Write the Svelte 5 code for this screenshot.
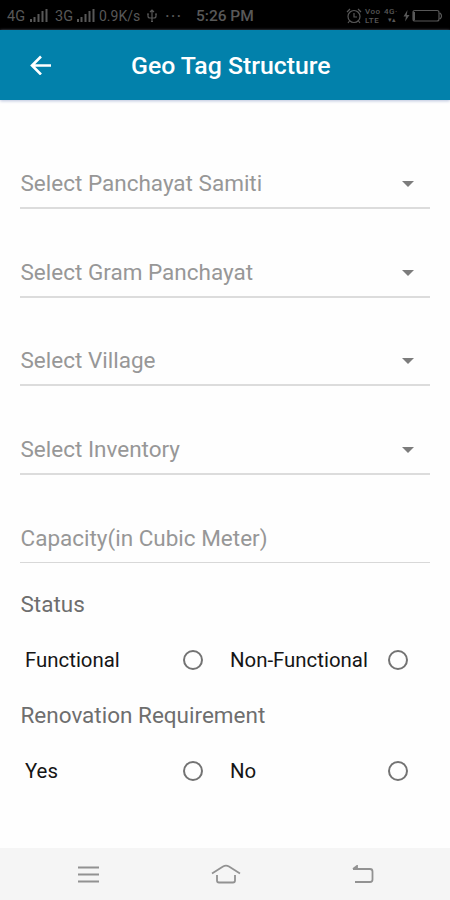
<script lang="ts">
  const selects = [
    "Select Panchayat Samiti",
    "Select Gram Panchayat",
    "Select Village",
    "Select Inventory",
  ];
  const groups = [
    { name: "status", title: "Status", options: ["Functional", "Non-Functional"] },
    { name: "renovation", title: "Renovation Requirement", options: ["Yes", "No"] },
  ];

  let picked: Record<string, string> = $state({});
</script>

{#snippet signal()}
  <svg class="signal" width="18" height="14" viewBox="0 0 18 14">
    <path d="M1 13V10M4.5 13V8M8.5 13V5M12.5 13V2M16.5 13V0" />
  </svg>
{/snippet}

<div class="screen">
  <div class="statusbar">
    <span class="net">4G</span>
    {@render signal()}
    <span class="net second">3G</span>
    {@render signal()}
    <span class="speed">0.9K/s</span>
    <svg class="usb" width="12" height="14" viewBox="0 0 12 14">
      <path d="M6 1V13M4 3L6 1L8 3M2 5V7Q2 9 4 9H8Q10 9 10 7V5M1 5H3M9 5H11M5 12.5H7" />
    </svg>
    <span class="dots">···</span>
    <span class="clock">5:26 PM</span>
    <svg class="alarm" width="16" height="16" viewBox="0 0 16 16">
      <circle cx="8" cy="8.5" r="6" />
      <path d="M8 5V9H11M1 4L4 1M12 1L15 4M3.5 13L2 15M12.5 13L14 15" />
    </svg>
    <span class="stack volte"><b>Voo</b><b>LTE</b></span>
    <span class="stack data"><b>4G·</b><i>▾▴</i></span>
    <svg class="battery" width="40" height="14" viewBox="0 0 40 14">
      <path class="bolt" d="M4.5 1L0.5 7.5H3L2 12.5L6.5 6H3.8Z" />
      <path d="M12 1.5H34Q36 1.5 36 3.5V10Q36 12 34 12H12Q10 12 10 10V3.5Q10 1.5 12 1.5ZM37 4Q40 7 37 10" />
      <path class="bolt" d="M10 3H12V11H10Z" />
    </svg>
  </div>

  <header>
    <button class="back" aria-label="Back">
      <svg width="22" height="20" viewBox="0 0 22 20">
        <path d="M21 10.5H2.5M11 1.5L2 10.5L11 19.5" />
      </svg>
    </button>
    <h1>Geo Tag Structure</h1>
  </header>

  <main>
    {#each selects as label}
      <div class="field">
        <span class="placeholder">{label}</span>
        <svg class="caret" width="12" height="6" viewBox="0 0 12 6"><path d="M0 0H12L6 6Z" /></svg>
      </div>
    {/each}
    <div class="field input">
      <span class="placeholder">Capacity(in Cubic Meter)</span>
    </div>

    {#each groups as group}
      <h2>{group.title}</h2>
      <div class="options">
        {#each group.options as option}
          <label>
            <span>{option}</span>
            <input type="radio" name={group.name} value={option} bind:group={picked[group.name]} />
          </label>
        {/each}
      </div>
    {/each}
  </main>

  <nav>
    <svg width="22" height="18" viewBox="0 0 22 18">
      <path d="M0 2.5H21M0 9.5H21M0 16.5H21" />
    </svg>
    <svg class="home" width="30" height="20" viewBox="0 0 30 20">
      <path d="M1 9.5L12 2.5Q15 0.9 18 2.5L29 9.5M6 11V16.5Q6 18.5 8 18.5H22Q24 18.5 24 16.5V11" />
    </svg>
    <svg width="22" height="19" viewBox="0 0 22 19">
      <path d="M1 4H18Q20.5 4 20.5 6.5V14.5Q20.5 17 18 17H3M1 4L5 1V4" />
    </svg>
  </nav>
</div>

<style>
  :global(body) {
    margin: 0;
  }

  .screen {
    display: flex;
    flex-direction: column;
    width: 450px;
    height: 900px;
    overflow: hidden;
    background: #fefefe;
    font-family: Roboto, "Liberation Sans", sans-serif;
  }

  svg {
    display: block;
    flex: none;
    fill: none;
  }

  .statusbar {
    display: flex;
    align-items: center;
    box-sizing: border-box;
    flex: none;
    height: 30px;
    padding: 2px 7px 0 7px;
    background: #000;
    color: #585858;
    font-size: 14px;
    white-space: nowrap;
  }
  .statusbar svg {
    stroke: #585858;
    stroke-width: 1.2;
  }
  .net {
    width: 19px;
    margin-right: 4px;
    font-size: 14.5px;
  }
  .second {
    margin-left: 7px;
    margin-right: 3px;
  }
  .statusbar .signal {
    stroke-width: 2;
  }
  .speed {
    width: 41px;
    margin-left: 4px;
    font-size: 14px;
  }
  .usb {
    margin-left: 6px;
  }
  .dots {
    width: 18px;
    margin-left: 7px;
    font-size: 18px;
    letter-spacing: 1px;
  }
  .clock {
    width: 60px;
    margin-left: 13px;
    font-size: 15.5px;
    font-weight: 500;
  }
  .alarm {
    margin-left: auto;
  }
  .stack {
    display: flex;
    flex-direction: column;
    font-size: 8px;
    line-height: 9px;
  }
  .stack b {
    font-weight: 500;
    letter-spacing: 0.5px;
  }
  .stack i {
    font-size: 7px;
    font-style: normal;
    text-align: center;
  }
  .volte {
    width: 17px;
    margin-left: 3px;
  }
  .data {
    width: 15px;
    margin-left: 2px;
  }
  .battery {
    margin-left: 4px;
  }
  .statusbar .bolt {
    fill: #585858;
    stroke: none;
  }

  header {
    display: flex;
    align-items: center;
    box-sizing: border-box;
    flex: none;
    height: 70px;
    padding-left: 30px;
    background: #0281ab;
    box-shadow: 0 1px 3px #b9c2dc;
  }
  .back {
    padding: 0;
    border: 0;
    background: none;
  }
  .back svg {
    stroke: #fff;
    stroke-width: 2.6;
  }
  h1 {
    margin: 0 0 0 79px;
    color: #fff;
    font-size: 24.8px;
    font-weight: 500;
    white-space: nowrap;
  }

  main {
    flex: 1;
    padding: 20.4px 20px 0;
  }
  .field {
    display: flex;
    align-items: flex-end;
    justify-content: space-between;
    box-sizing: border-box;
    height: 88.7px;
    padding: 0 16px 8px 0.5px;
    border-bottom: 2px solid #dcdcdc;
  }
  .field.input {
    height: 88.2px;
    border-bottom: 1px solid #d8d8d8;
  }
  .placeholder {
    color: #979797;
    font-size: 22.5px;
    line-height: 32px;
  }
  .caret {
    margin-bottom: 12px;
    fill: #7c7c7c;
  }

  h2 {
    height: 55.3px;
    margin: 0;
    padding-left: 0.5px;
    color: #6e6e6e;
    font-size: 22.5px;
    font-weight: 400;
    line-height: 55.3px;
  }
  main h2:first-of-type {
    margin-top: 13.8px;
  }
  .options {
    display: grid;
    grid-template-columns: 205px 205px;
    height: 55.3px;
  }
  label {
    display: flex;
    align-items: center;
    justify-content: space-between;
    padding: 0 22px 0 5px;
    color: #151515;
    font-size: 20.4px;
  }
  input {
    box-sizing: border-box;
    width: 20px;
    height: 20px;
    margin: 0;
    border: 2px solid #737373;
    border-radius: 50%;
    appearance: none;
  }
  input:checked {
    background: #0281ab;
    box-shadow: inset 0 0 0 3px #fff;
  }

  nav {
    display: flex;
    align-items: center;
    justify-content: space-between;
    box-sizing: border-box;
    flex: none;
    height: 52px;
    padding: 0 76px 0 78px;
    background: #f5f5f5;
  }
  nav svg {
    stroke: #929292;
    stroke-width: 1.8;
  }
</style>
